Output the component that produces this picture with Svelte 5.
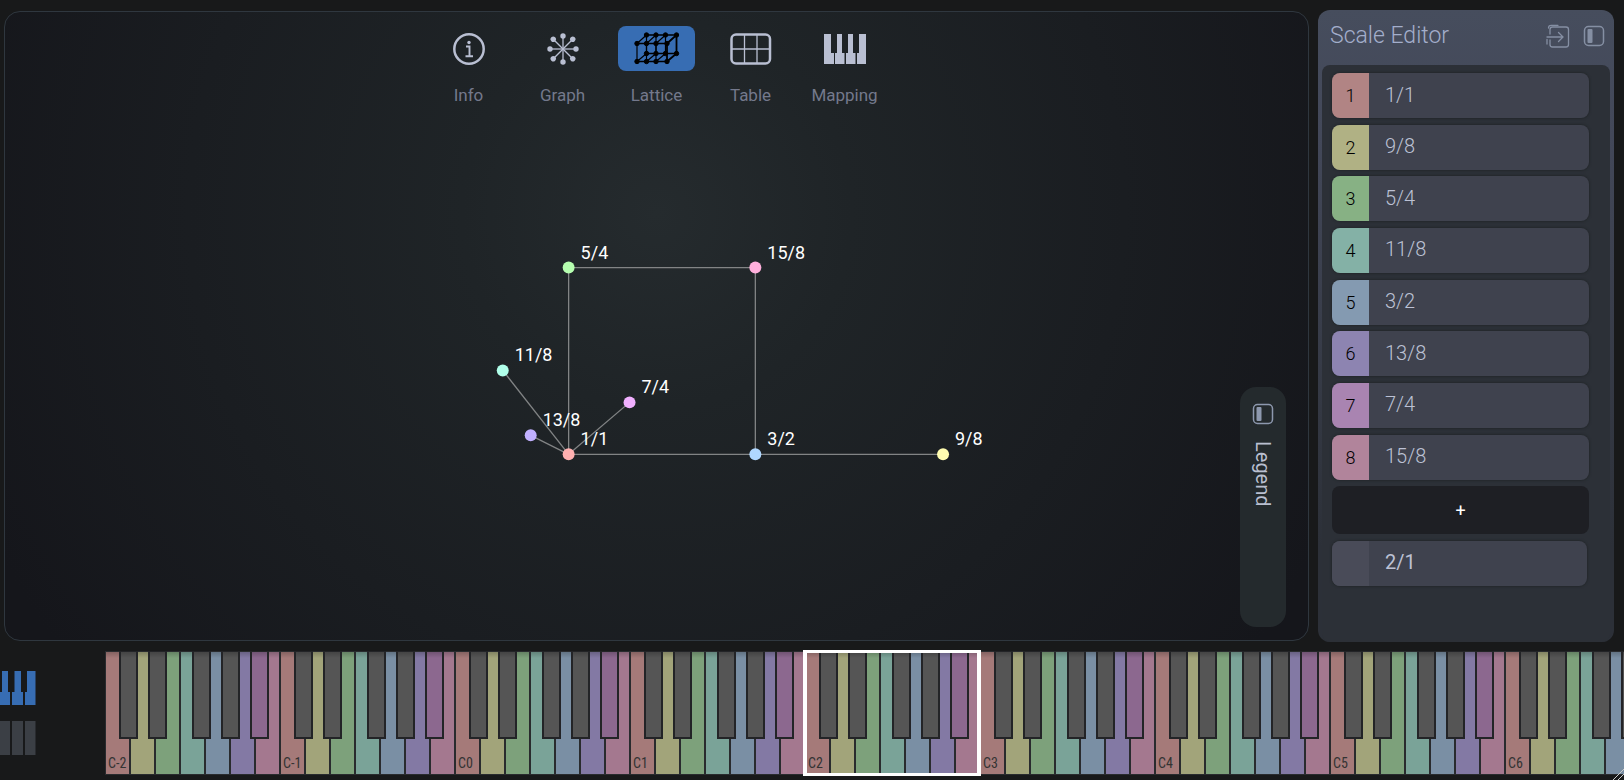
<script lang="ts">
    type Note = { id: number, ratio: string, color: string }
    type Point = { ratio: string, x: number, y: number, color: string }

    let notes: Note[] = $state([
        { id: 1, ratio: '1/1', color: '#b18484' },
        { id: 2, ratio: '9/8', color: '#b0b184' },
        { id: 3, ratio: '5/4', color: '#87b184' },
        { id: 4, ratio: '11/8', color: '#84b1a6' },
        { id: 5, ratio: '3/2', color: '#849ab1' },
        { id: 6, ratio: '13/8', color: '#8d84b1' },
        { id: 7, ratio: '7/4', color: '#a984b1' },
        { id: 8, ratio: '15/8', color: '#b1849b' }
    ])
    let period = $state('2/1')

    const views = ['Info', 'Graph', 'Lattice', 'Table', 'Mapping']
    let view = $state('Lattice')

    const points: Point[] = [
        { ratio: '1/1', x: 563, y: 443, color: '#ffb0b0' },
        { ratio: '9/8', x: 938, y: 443, color: '#fffcb0' },
        { ratio: '5/4', x: 563, y: 256, color: '#b6ffb0' },
        { ratio: '11/8', x: 497, y: 359, color: '#b0ffea' },
        { ratio: '3/2', x: 750, y: 443, color: '#b0d7ff' },
        { ratio: '13/8', x: 525, y: 424, color: '#c1b0ff' },
        { ratio: '7/4', x: 624, y: 391, color: '#f1b0ff' },
        { ratio: '15/8', x: 750, y: 256, color: '#ffb0dc' }
    ]
    const edges = [[0, 4], [4, 1], [0, 2], [2, 7], [7, 4], [0, 3], [0, 5], [0, 6]]

    const whites = ['#a57a79', '#a2a47a', '#7da17b', '#7aa398', '#7a8fa4', '#8379a4', '#a4788f']
    // left edge of each black key, in percent of an octave
    const blacks = [
        { left: 8, color: '#555' },
        { left: 24.4, color: '#555' },
        { left: 49.8, color: '#555' },
        { left: 66.2, color: '#555' },
        { left: 82.6, color: '#8c688f' }
    ]
    const octaves = ['C-2', 'C-1', 'C0', 'C1', 'C2', 'C3', 'C4', 'C5', 'C6']
    let selected = $state('C2')
    let layout = $state('piano')

    const rays = [0, 45, 90, 135, 180, 225, 270, 315]
    // front and back corner of each column in the lattice icon
    const columns = [[2, 11.5], [11.5, 21], [21, 30.5], [32, 41.5]]

    function addNote() {
        notes.push({ id: notes.length + 1, ratio: '', color: '#84868f' })
    }
</script>

{#snippet panelIcon()}
    <svg width="22" height="22" viewBox="0 0 22 22" fill="none">
        <rect x="1.500" y="1.500" width="19" height="19" rx="4" stroke="currentColor" stroke-width="1.5" />
        <rect x="4.500" y="4" width="5" height="14" rx="1" fill="currentColor" />
    </svg>
{/snippet}

<div class="app">
    <div class="workspace">
        <main>
            <svg class="lattice" viewBox="0 0 1302 629">
                {#each edges as [a, b]}
                    <line x1={points[a].x} y1={points[a].y} x2={points[b].x} y2={points[b].y} />
                {/each}
                {#each points as p}
                    <circle cx={p.x} cy={p.y} r="6" fill={p.color} />
                    <text x={p.x + 12} y={p.y - 9}>{p.ratio}</text>
                {/each}
            </svg>

            <nav>
                {#each views as name}
                    <button class="view" class:active={view === name} onclick={() => view = name}>
                        <span class="icon">
                            {#if name === 'Info'}
                                <svg width="32" height="32" viewBox="0 0 32 32" fill="none">
                                    <circle cx="16" cy="16" r="14.7" stroke="currentColor" stroke-width="2.5" />
                                    <circle cx="16" cy="9.5" r="1.7" fill="currentColor" />
                                    <path d="M13 13.5h3.500v10M12.5 23.3h7.500" stroke="currentColor" stroke-width="1.9" />
                                </svg>
                            {:else if name === 'Graph'}
                                <svg width="32" height="32" viewBox="0 0 32 32">
                                    {#each rays as angle}
                                        <g transform="rotate({angle} 16 16)">
                                            <line x1="16" y1="16" x2="16" y2="3" stroke="currentColor" stroke-width="1.3" />
                                            <circle cx="16" cy={angle % 90 ? 2.2 : 3} r="2.7" fill="currentColor" />
                                        </g>
                                    {/each}
                                </svg>
                            {:else if name === 'Lattice'}
                                <svg width="46" height="34" viewBox="-1 0 46 34" fill="none" stroke="currentColor">
                                    <path stroke-width="1.300" d="M2 11.500h30M2 29.500h30M11.500 3h30M11.500 21.500h30" />
                                    {#each columns as [front, back], i}
                                        <path stroke-width={i === 3 ? 1.8 : 1.2} d="M{front} 11.500v18M{front} 11.500L{back} 3M{front} 29.500L{back} 21.500M{back} 3v18" />
                                        <circle cx={front} cy="11.500" r="2.200" fill="currentColor" />
                                        <circle cx={front} cy="29.500" r="2.200" fill="currentColor" />
                                        <circle cx={back} cy="3" r="2.200" fill="currentColor" />
                                        <circle cx={back} cy="21.500" r="2.200" fill="currentColor" />
                                    {/each}
                                </svg>
                            {:else if name === 'Table'}
                                <svg width="42" height="32" viewBox="0 0 42 32" fill="none" stroke="currentColor">
                                    <rect x="1.5" y="1.5" width="38.5" height="29" rx="4.5" stroke-width="2.5" />
                                    <path d="M14.5 2v28M27 2v28M2 16h38" stroke-width="1.3" />
                                </svg>
                            {:else}
                                <svg width="42" height="30" viewBox="0 0 42 30" fill="currentColor">
                                    <path d="M0 0h7v19h3v11H0zM13 0h5v19h2.500v11h-9.500V19H13zM24 0h5v19h2.500v11H22V19h2zM35 0h7v30h-9V19h2z" />
                                </svg>
                            {/if}
                        </span>
                        {name}
                    </button>
                {/each}
            </nav>

            <button class="legend">
                {@render panelIcon()}
                <span>Legend</span>
            </button>
        </main>

        <aside>
            <header>
                <h1>Scale Editor</h1>
                <button aria-label="Import scale">
                    <svg width="24" height="24" viewBox="0 0 24 24" fill="none" stroke="currentColor" stroke-width="1.3" stroke-linecap="round">
                        <path d="M4 10V5.500Q4 3 6.500 3H20q2.500 0 2.500 2.500v15Q22.500 23 20 23H6.500Q4 23 4 20.500V16" />
                        <path d="M1 13h16M12.500 8.500L17 13l-4.500 4.500M1 15.500V20M2.500 4q0-2.700 2.700-2.700H12" />
                    </svg>
                </button>
                <button aria-label="Collapse editor">{@render panelIcon()}</button>
            </header>
            <div class="notes">
                {#each notes as note}
                    <div class="note">
                        <label for="note-{note.id}" style:background={note.color}>{note.id}</label>
                        <input id="note-{note.id}" type="text" bind:value={note.ratio}>
                    </div>
                {/each}
                <button class="add" onclick={addNote}>+</button>
                <div class="note period">
                    <label for="period" aria-label="Period"></label>
                    <input id="period" type="text" bind:value={period}>
                </div>
            </div>
        </aside>
    </div>

    <footer>
        <div class="layouts">
            <button class:active={layout === 'piano'} aria-label="Piano keys" onclick={() => layout = 'piano'}>
                <svg width="36" height="34" viewBox="0 0 36 34" fill="currentColor">
                    <path d="M2 0h6v21h2v13H0V21h2zM14.500 0h6.500v21h2v13H12V21h2.500zM27 0h8.500v34H25V21h2z" />
                </svg>
            </button>
            <button class:active={layout === 'linear'} aria-label="Linear keys" onclick={() => layout = 'linear'}>
                <svg width="36" height="34" viewBox="0 0 36 34" fill="currentColor">
                    <path d="M0 0h10v34H0zM12 0h11v34H12zM25 0h10.500v34H25z" />
                </svg>
            </button>
        </div>
        <div class="keyboard">
            {#each octaves as octave}
                <button class="octave" class:selected={selected === octave} onclick={() => selected = octave}>
                    {#each whites as color, i}
                        <span class="white" style:background-color={color}>{i === 0 ? octave : ''}</span>
                    {/each}
                    {#each blacks as key}
                        <span class="black" style:left="{key.left}%" style:background-color={key.color}></span>
                    {/each}
                </button>
            {/each}
        </div>
        <svg class="grip" width="12" height="12" viewBox="0 0 12 12" stroke="#ccc">
            <path d="M1 12L12 1M6 12l6-6" />
        </svg>
    </footer>
</div>

<style>
    :global(body) {
        margin: 0;
        background: #18191a;
    }

    .app {
        display: flex;
        flex-direction: column;
        height: 100vh;
        overflow: hidden;
        box-sizing: border-box;
        padding-top: 10px;
        font-family: Roboto, "Open Sans", sans-serif;
    }

    button {
        padding: 0;
        border: none;
        background: none;
        font: inherit;
        color: inherit;
        cursor: pointer;
    }

    svg { display: block; }

    .workspace {
        flex: 1;
        display: flex;
        gap: 9px;
        min-height: 0;
        padding: 0 10px 0 4px;
    }

    main {
        position: relative;
        flex: 1;
        min-width: 0;
        margin: 1px 0;
        border: 1px solid #2f373f;
        border-radius: 16px;
        background: radial-gradient(circle at 50% 32%, #252b2e 0, #1f2427 25%, #15161b 95%);
    }

    .lattice {
        position: absolute;
        inset: 0;
        width: 100%;
        height: 100%;
    }

    .lattice line {
        stroke: #828485;
        stroke-width: 1.3;
    }

    .lattice text {
        font-size: 18px;
        fill: #fff;
    }

    nav {
        position: relative;
        display: flex;
        justify-content: center;
        padding-top: 14px;
    }

    .view {
        display: flex;
        flex-direction: column;
        align-items: center;
        gap: 14px;
        width: 94px;
        font-size: 17px;
        line-height: 20px;
        color: #74798c;
    }

    .icon {
        display: grid;
        place-items: center;
        width: 77px;
        height: 45px;
        border-radius: 8px;
        color: #b9bfd2;
    }

    .active .icon {
        background: #376db3;
        color: #000;
    }

    .legend {
        position: absolute;
        right: 22px;
        bottom: 13px;
        display: flex;
        flex-direction: column;
        align-items: center;
        gap: 16px;
        width: 46px;
        height: 240px;
        box-sizing: border-box;
        padding-top: 16px;
        border-radius: 16px;
        background: #242a2d;
        color: #8d98ae;
    }

    .legend span {
        writing-mode: vertical-rl;
        font-size: 20px;
        line-height: 24px;
        color: #b9bfd0;
    }

    aside {
        display: flex;
        flex-direction: column;
        width: 296px;
        border-radius: 12px;
        background: linear-gradient(#464d5d, #434859 20%, #2c3038 85%);
    }

    header {
        display: flex;
        align-items: center;
        gap: 13px;
        height: 51px;
        padding: 0 9px 0 12px;
        color: #858fa3;
    }

    h1 {
        flex: 1;
        margin: 0;
        font-size: 23px;
        font-weight: 300;
        color: #a3aecb;
    }

    .notes {
        flex: 1;
        display: flex;
        flex-direction: column;
        justify-content: space-between;
        margin: 4px 4px 0;
        padding: 8px 21px 56px 10px;
        border-radius: 8px;
        background: #2c3037;
    }

    .note {
        display: flex;
        height: 45px;
        box-sizing: border-box;
        border-radius: 8px;
        overflow: hidden;
        background: #3f424e;
        box-shadow: 0 0 2px 1px #24282c;
    }

    .note label {
        display: grid;
        place-items: center;
        width: 37px;
        font-size: 18px;
        font-weight: 300;
        color: #000;
    }

    .note input {
        flex: 1;
        min-width: 0;
        padding: 0 16px 2px;
        border: none;
        outline: none;
        background: none;
        font: 300 20px Roboto, "Open Sans", sans-serif;
        color: #bcc1d4;
    }

    .note.period { margin-right: 2px; }
    .period label { background: #494b58; }
    .period input { font-weight: 400; }

    .add {
        height: 48px;
        border-radius: 8px;
        background: #1e1f24;
        font-size: 18px;
        color: #fff;
    }

    footer {
        position: relative;
        display: flex;
        height: 138px;
        padding-top: 9px;
        box-sizing: border-box;
    }

    .layouts {
        display: flex;
        flex-direction: column;
        gap: 16px;
        width: 105px;
        padding-top: 20px;
        color: #3b3f45;
    }

    .layouts button { width: 36px; }
    .layouts .active { color: #376db3; }

    .keyboard {
        flex: 1;
        display: flex;
        min-width: 0;
    }

    .octave {
        position: relative;
        flex: none;
        display: flex;
        width: 175px;
        height: 124px;
    }

    .white {
        flex: 1;
        display: flex;
        align-items: flex-end;
        height: 100%;
        box-sizing: border-box;
        padding: 0 0 3px 2px;
        border: 1px solid #292b2e;
        background-image: linear-gradient(rgb(0 0 0 / 0.2), transparent 6px);
        font: 14px/16px "Roboto Condensed", "Liberation Sans Narrow", "DejaVu Sans Condensed", sans-serif;
        white-space: nowrap;
        color: #333;
    }

    .black {
        position: absolute;
        top: 0;
        width: 19px;
        height: 88px;
        box-sizing: border-box;
        border: 2px solid #232427;
        border-top-width: 1px;
        background-image: linear-gradient(rgb(0 0 0 / 0.2), transparent 6px);
    }

    .selected::after {
        content: "";
        position: absolute;
        inset: -1px -1px -1px -2px;
        border: solid #fff;
        border-width: 3px 4px;
    }

    .selected { z-index: 1; }

    .grip {
        position: absolute;
        right: 0;
        bottom: 0;
    }
</style>
